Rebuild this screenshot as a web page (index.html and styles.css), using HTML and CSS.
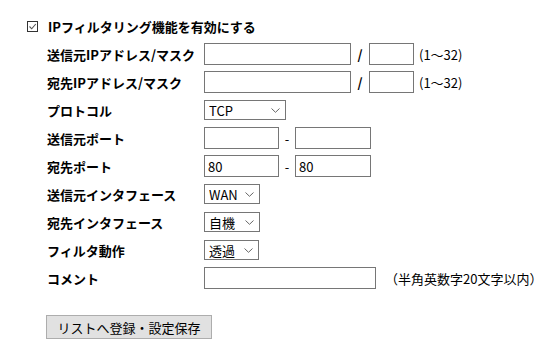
FILE: index.html
```html
<!DOCTYPE html>
<html lang="ja">

<head>
    <meta charset="UTF-8">
    <meta name="viewport" content="width=device-width, initial-scale=1.0">
    <title>IPフィルタ設定</title>
    <link rel="stylesheet" href="styles.css">
</head>

<body>
    <div class="panel">
        <label class="enable"><input type="checkbox" class="check" checked>IPフィルタリング機能を有効にする</label>

        <div class="form">
            <div class="label">送信元IPアドレス/マスク</div>
            <div class="field">
                <input type="text" class="box ip">
                <span class="sep">/</span>
                <input type="text" class="box mask">
                <span class="range">(1〜32)</span>
            </div>

            <div class="label">宛先IPアドレス/マスク</div>
            <div class="field">
                <input type="text" class="box ip">
                <span class="sep">/</span>
                <input type="text" class="box mask">
                <span class="range">(1〜32)</span>
            </div>

            <div class="label">プロトコル</div>
            <div class="field">
                <select class="pick proto">
                    <option>TCP</option>
                    <option>UDP</option>
                </select>
            </div>

            <div class="label">送信元ポート</div>
            <div class="field">
                <input type="text" class="box port">
                <span class="dash">-</span>
                <input type="text" class="box port2">
            </div>

            <div class="label">宛先ポート</div>
            <div class="field">
                <input type="text" class="box port" value="80">
                <span class="dash">-</span>
                <input type="text" class="box port2" value="80">
            </div>

            <div class="label">送信元インタフェース</div>
            <div class="field">
                <select class="pick iface">
                    <option>WAN</option>
                    <option>LAN</option>
                </select>
            </div>

            <div class="label">宛先インタフェース</div>
            <div class="field">
                <select class="pick iface">
                    <option>自機</option>
                    <option>WAN</option>
                </select>
            </div>

            <div class="label">フィルタ動作</div>
            <div class="field">
                <select class="pick action">
                    <option>透過</option>
                    <option>破棄</option>
                </select>
            </div>

            <div class="label">コメント</div>
            <div class="field">
                <input type="text" class="box comment">
                <span class="hint">（半角英数字20文字以内）</span>
            </div>
        </div>

        <button class="save">リストへ登録・設定保存</button>
    </div>
</body>

</html>
```

FILE: styles.css
```css
* {
    margin: 0;
    padding: 0;
    box-sizing: border-box;
}

body {
    font-family: "Noto Sans CJK JP", "Noto Sans", sans-serif;
    font-size: 13px;
    color: #000;
    background: #fff;
}

.panel {
    padding: 13px 0 0 27px;
}

.enable {
    display: flex;
    align-items: center;
    height: 27px;
    font-weight: bold;
}

/* checkbox drawn flat, like the old windows look */
.check {
    appearance: none;
    width: 11px;
    height: 11px;
    border: 1px solid #333;
    margin-right: 10px;
    background: #fff url("data:image/svg+xml,%3Csvg xmlns='http://www.w3.org/2000/svg' width='9' height='9'%3E%3Cpath d='M1.5 4.5 L3.7 6.8 L7.8 2' fill='none' stroke='%23555' stroke-width='1.1'/%3E%3C/svg%3E") no-repeat center;
}

.form {
    display: grid;
    grid-template-columns: 157px auto;
    grid-auto-rows: 28px;
    margin-left: 20px;
}

.label {
    display: flex;
    align-items: center;
    font-weight: bold;
    white-space: nowrap;
}

.field {
    display: flex;
    align-items: center;
}

.box {
    height: 22px;
    border: 1px solid #767676;
    padding: 0 3px;
    font: inherit;
    color: #000;
    background: #fff;
    outline: none;
}

.ip {
    width: 147px;
}

.mask {
    width: 45px;
}

.sep {
    font-weight: bold;
    width: 18px;
    text-align: center;
}

.range {
    margin-left: 5px;
}

.port {
    width: 75px;
}

.port2 {
    width: 76px;
}

.dash {
    width: 16px;
    text-align: center;
}

.comment {
    width: 172px;
}

.hint {
    margin-left: 9px;
}

.pick {
    appearance: none;
    height: 20px;
    border: 1px solid #767676;
    border-radius: 0;
    padding: 0 0 0 4px;
    font: inherit;
    color: #000;
    background: #fff url("data:image/svg+xml,%3Csvg xmlns='http://www.w3.org/2000/svg' width='9' height='5'%3E%3Cpath d='M0.5 0.5 L4.5 4.3 L8.5 0.5' fill='none' stroke='%23666' stroke-width='1'/%3E%3C/svg%3E") no-repeat right 5px center;
}

.proto {
    width: 82px;
}

.iface {
    width: 56px;
}

.action {
    width: 55px;
}

.save {
    margin: 23px 0 0 19px;
    width: 166px;
    height: 24px;
    background: #e1e1e1;
    border: 1px solid #adadad;
    font: inherit;
    color: #000;
}
```
